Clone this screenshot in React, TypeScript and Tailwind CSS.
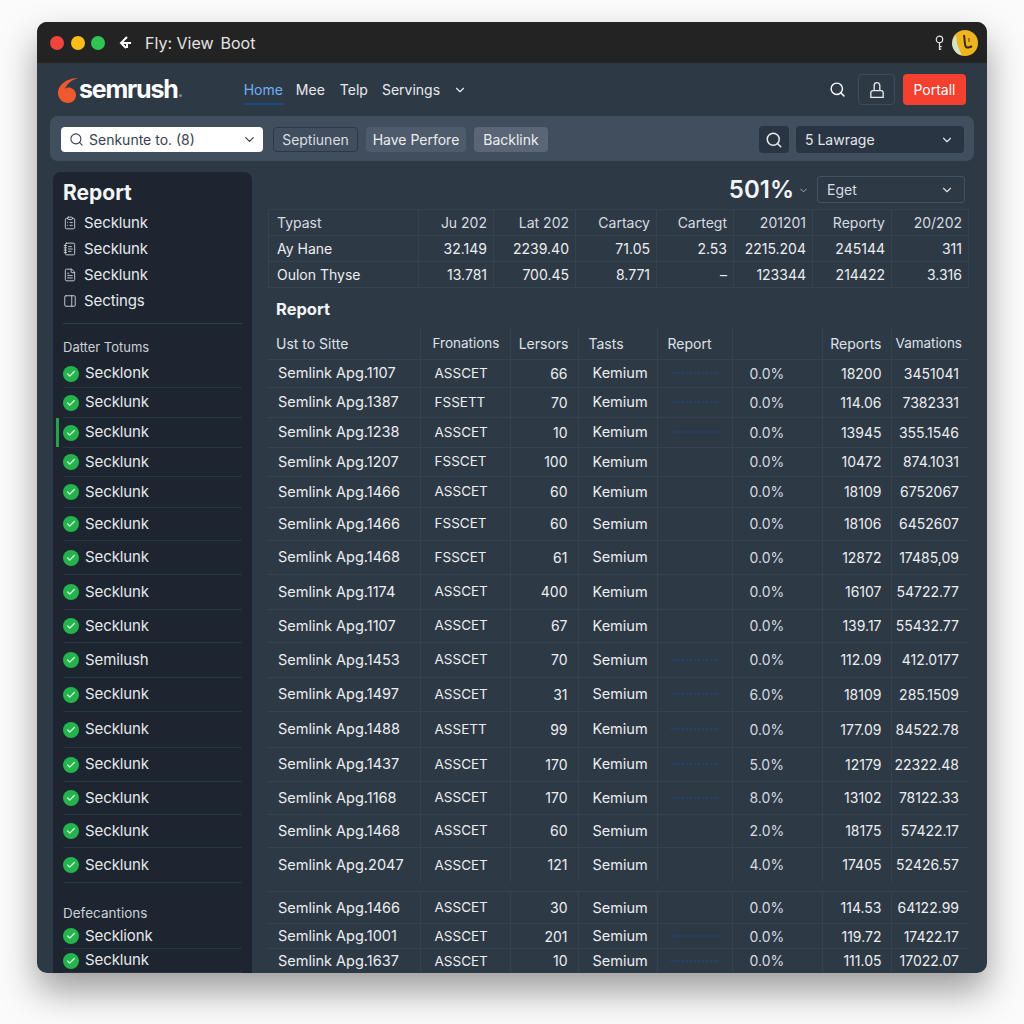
import { Check, ChevronDown, ClipboardList, FileText, NotebookText, PanelRight, Search } from "lucide-react";

const rows = [
  { h: "h-[28px]", name: "Semlink Apg.1107", code: "ASSCET", n: "66", kind: "Kemium", dash: true, pct: "0.0%", reports: "18200", vars: "3451041", side: "Secklonk" },
  { h: "h-[30px]", name: "Semlink Apg.1387", code: "FSSETT", n: "70", kind: "Kemium", dash: true, pct: "0.0%", reports: "114.06", vars: "7382331", side: "Secklunk" },
  { h: "h-[30px]", name: "Semlink Apg.1238", code: "ASSCET", n: "10", kind: "Kemium", dash: true, pct: "0.0%", reports: "13945", vars: "355.1546", side: "Secklunk" },
  { h: "h-[29px]", name: "Semlink Apg.1207", code: "FSSCET", n: "100", kind: "Kemium", dash: false, pct: "0.0%", reports: "10472", vars: "874.1031", side: "Secklunk" },
  { h: "h-[31px]", name: "Semlink Apg.1466", code: "ASSCET", n: "60", kind: "Kemium", dash: false, pct: "0.0%", reports: "18109", vars: "6752067", side: "Secklunk" },
  { h: "h-[33px]", name: "Semlink Apg.1466", code: "FSSCET", n: "60", kind: "Semium", dash: false, pct: "0.0%", reports: "18106", vars: "6452607", side: "Secklunk" },
  { h: "h-[34px]", name: "Semlink Apg.1468", code: "FSSCET", n: "61", kind: "Semium", dash: false, pct: "0.0%", reports: "12872", vars: "17485,09", side: "Secklunk" },
  { h: "h-[35px]", name: "Semlink Apg.1174", code: "ASSCET", n: "400", kind: "Kemium", dash: false, pct: "0.0%", reports: "16107", vars: "54722.77", side: "Secklunk" },
  { h: "h-[33px]", name: "Semlink Apg.1107", code: "ASSCET", n: "67", kind: "Kemium", dash: false, pct: "0.0%", reports: "139.17", vars: "55432.77", side: "Secklunk" },
  { h: "h-[35px]", name: "Semlink Apg.1453", code: "ASSCET", n: "70", kind: "Semium", dash: true, pct: "0.0%", reports: "112.09", vars: "412.0177", side: "Semilush" },
  { h: "h-[34px]", name: "Semlink Apg.1497", code: "ASSCET", n: "31", kind: "Semium", dash: true, pct: "6.0%", reports: "18109", vars: "285.1509", side: "Secklunk" },
  { h: "h-[36px]", name: "Semlink Apg.1488", code: "ASSETT", n: "99", kind: "Kemium", dash: true, pct: "0.0%", reports: "177.09", vars: "84522.78", side: "Secklunk" },
  { h: "h-[34px]", name: "Semlink Apg.1437", code: "ASSCET", n: "170", kind: "Kemium", dash: true, pct: "5.0%", reports: "12179", vars: "22322.48", side: "Secklunk" },
  { h: "h-[33px]", name: "Semlink Apg.1168", code: "ASSCET", n: "170", kind: "Kemium", dash: true, pct: "8.0%", reports: "13102", vars: "78122.33", side: "Secklunk" },
  { h: "h-[33px]", name: "Semlink Apg.1468", code: "ASSCET", n: "60", kind: "Semium", dash: false, pct: "2.0%", reports: "18175", vars: "57422.17", side: "Secklunk" },
  { h: "h-[35px]", name: "Semlink Apg.2047", code: "ASSCET", n: "121", kind: "Semium", dash: false, pct: "4.0%", reports: "17405", vars: "52426.57", side: "Secklunk" },
];

const lastRows = [
  { h: "h-[32px]", name: "Semlink Apg.1466", code: "ASSCET", n: "30", kind: "Semium", dash: false, pct: "0.0%", reports: "114.53", vars: "64122.99" },
  { h: "h-[25px]", name: "Semlink Apg.1001", code: "ASSCET", n: "201", kind: "Semium", dash: true, pct: "0.0%", reports: "119.72", vars: "17422.17" },
  { h: "h-[24px]", name: "Semlink Apg.1637", code: "ASSCET", n: "10", kind: "Semium", dash: true, pct: "0.0%", reports: "111.05", vars: "17022.07" },
];

const topRows = [
  ["Typast", "Ju 202", "Lat 202", "Cartacy", "Cartegt", "201201", "Reporty", "20/202"],
  ["Ay Hane", "32.149", "2239.40", "71.05", "2.53", "2215.204", "245144", "311"],
  ["Oulon Thyse", "13.781", "700.45", "8.771", "–", "123344", "214422", "3.316"],
];

const topCols = ["w-[150px]", "w-[75px]", "w-[82px]", "w-[81px]", "w-[77px]", "w-[79px]", "w-[79px]", "w-[77px]"];
const cell = "border-r border-[#37424f] last:border-r-0";

function Colgroup() {
  return (
    <colgroup>
      <col className="w-[152px]" />
      <col className="w-[90px]" />
      <col className="w-[68px]" />
      <col className="w-[79px]" />
      <col className="w-[75px]" />
      <col className="w-[90px]" />
      <col className="w-[69px]" />
      <col className="w-[77px]" />
    </colgroup>
  );
}

function DataRow({ row }: { row: (typeof lastRows)[number] }) {
  return (
    <tr className={`${row.h} border-b border-[#37424f] last:border-b-0`}>
      <td className={`${cell} pl-[10px] text-[14.5px] whitespace-nowrap`}>{row.name}</td>
      <td className={`${cell} pl-[14px] text-[13.5px]`}>{row.code}</td>
      <td className={`${cell} pr-[10px] text-right`}>{row.n}</td>
      <td className={`${cell} pl-[14px] text-[14.5px]`}>{row.kind}</td>
      <td className={cell}>
        {row.dash && <div className="ml-[13px] w-[48px] border-t-2 border-dotted border-[#25416f]" />}
      </td>
      <td className={`${cell} pl-[17px] text-[#d6dbe1]`}>{row.pct}</td>
      <td className={`${cell} pr-[9px] text-right`}>{row.reports}</td>
      <td className={`${cell} pr-[9px] text-right`}>{row.vars}</td>
    </tr>
  );
}

function SideCheck({ label, height, active }: { label: string; height: string; active?: boolean }) {
  return (
    <div className={`${height} relative flex items-center gap-[6px] border-b border-[#2a3440] text-[15px] tracking-[-0.1px] text-[#e8eaed]`}>
      {active && <span className="absolute -left-[7px] top-0 h-full w-[3px] bg-[#22a447]" />}
      <span className="flex size-[16px] items-center justify-center rounded-full bg-[#25b34d]">
        <Check size={10} strokeWidth={3} className="text-[#d8f5df]" />
      </span>
      {label}
    </div>
  );
}

function SideDoc({ label, icon: Icon }: { label: string; icon: typeof FileText }) {
  return (
    <div className="flex h-[26px] items-center gap-[7px] text-[15px] tracking-[-0.1px] text-[#e8eaed]">
      <Icon size={14} strokeWidth={1.5} className="text-[#d7dade]" />
      {label}
    </div>
  );
}

export default function App() {
  return (
    <div className="h-screen overflow-hidden bg-[#fbfbfb] pl-[37px] pt-[22px] font-['Inter','Liberation_Sans',sans-serif]">
      <div className="flex h-[951px] w-[950px] flex-col overflow-hidden rounded-[10px] bg-[#2e3946] shadow-[0_18px_36px_rgba(0,0,0,0.38)]">
        {/* title bar */}
        <div className="flex h-[41px] shrink-0 items-center bg-[#232323] pl-[13px] pr-[9px] text-[16px] text-[#e4e4e4]">
          <span className="size-[14px] rounded-full bg-[#f2443a]" />
          <span className="ml-[7px] size-[14px] rounded-full bg-[#f9bd1a]" />
          <span className="ml-[6px] size-[14px] rounded-full bg-[#2fc552]" />
          <svg viewBox="0 0 16 16" className="ml-[13px] size-[16px] text-white" fill="none" stroke="currentColor" strokeWidth="2">
            <path d="M9 2 3 8l5 5M3.5 8H13M9 8v5" />
          </svg>
          <span className="ml-[11px]">Fly: View</span>
          <span className="ml-[7px]">Boot</span>
          <svg viewBox="0 0 12 18" className="ml-auto h-[16px] w-[11px] text-[#e3e3e3]" fill="none" stroke="currentColor" strokeWidth="1.4">
            <circle cx="6" cy="5" r="3.6" />
            <path d="M6 9v8M6 13h2.5M6 16h2" />
          </svg>
          <span className="relative ml-[7px] flex size-[26px] items-center justify-center overflow-hidden rounded-full bg-[#f0b41f]">
            <svg viewBox="0 0 26 26" className="size-[26px]" fill="none">
              <path d="M0 14a13 13 0 0 0 10 12L5 14 4 5A13 13 0 0 0 0 14Z" fill="#cfe3d0" />
              <path d="M12 5c1 4 0 9 2 12 2 1 5 0 6-1" stroke="#3a2c10" strokeWidth="2" />
              <path d="M17 8v4" stroke="#8a6410" strokeWidth="1.5" />
            </svg>
          </span>
        </div>

        {/* nav */}
        <div className="flex h-[53px] shrink-0 items-center pl-[21px] pr-[21px] text-[14px] text-[#e8ebee]">
          <svg viewBox="0 0 22 26" className="h-[26px] w-[22px]">
            <path d="M20 1C16 1 12 2 8 4 3 7 0 11 0 16c0 6 5 10 10 10 4 0 8-3 8-8 0-3-2-6-5-7-3-1-5 0-6 1 1-4 6-9 13-11Z" fill="#ee5a2e" />
          </svg>
          <span className="-ml-[1px] text-[25px] font-bold leading-none tracking-[-1.2px] text-white">semrush</span>
          <span className="ml-[1px] mt-[12px] size-[3px] rounded-full bg-[#7b8794]" />
          <nav className="ml-[62px] flex h-full items-center">
            <span className="relative flex h-full items-center text-[#6fb0f5]">
              Home
              <span className="absolute bottom-[11px] left-0 h-[2px] w-full bg-[#1b4a85]" />
            </span>
            <span className="ml-[13px]">Mee</span>
            <span className="ml-[15px]">Telp</span>
            <span className="ml-[14px]">Servings</span>
            <ChevronDown size={14} className="ml-[13px]" />
          </nav>
          <Search size={17} strokeWidth={2} className="ml-auto text-white" />
          <span className="ml-[12px] flex h-[31px] w-[37px] items-center justify-center rounded-[4px] border border-[#3f4c5b]">
            <svg viewBox="0 0 16 16" className="size-[18px] text-[#e6e8eb]" fill="none" stroke="currentColor" strokeWidth="1.2">
              <path d="M5.5 8.5V4a2.5 2.5 0 0 1 5 0v4.5" />
              <path d="M2.5 14.5v-4a2 2 0 0 1 2-2h7a2 2 0 0 1 2 2v4z" />
            </svg>
          </span>
          <span className="ml-[8px] flex h-[31px] w-[63px] items-center justify-center rounded-[4px] bg-[#f4402f] text-white">
            Portall
          </span>
        </div>

        {/* filter bar */}
        <div className="mx-[13px] flex h-[45px] shrink-0 items-center rounded-[8px] bg-[#414e5d] pl-[11px] pr-[10px] pt-[2px] text-[14px]">
          <div className="flex h-[25px] w-[202px] items-center rounded-[4px] bg-white pl-[8px] pr-[6px] text-[#374151]">
            <Search size={15} strokeWidth={1.8} className="mr-[5px] text-[#374151]" />
            Senkunte to. (8)
            <ChevronDown size={15} className="ml-auto" />
          </div>
          <span className="ml-[10px] flex h-[25px] w-[85px] items-center justify-center rounded-[4px] border border-[#2d3846] text-[#d9dde2]">Septiunen</span>
          <span className="ml-[8px] flex h-[25px] w-[100px] items-center justify-center rounded-[4px] bg-[#4e5b6a] text-[#eceef0]">Have Perfore</span>
          <span className="ml-[8px] flex h-[25px] w-[74px] items-center justify-center rounded-[4px] bg-[#5a6676] text-[#eceef0]">Backlink</span>
          <span className="ml-auto flex h-[27px] w-[30px] items-center justify-center rounded-[4px] bg-[#2a3543]">
            <Search size={18} strokeWidth={2} className="text-[#e8ebee]" />
          </span>
          <div className="ml-[7px] flex h-[27px] w-[168px] items-center rounded-[4px] bg-[#2a3543] pl-[9px] pr-[10px] text-[#e2e5e9]">
            5 Lawrage
            <ChevronDown size={14} className="ml-auto" />
          </div>
        </div>

        <div className="flex min-h-0 flex-1 pt-[11px]">
          {/* sidebar */}
          <aside className="ml-[16px] w-[199px] shrink-0 rounded-t-[8px] bg-[#1c2530] pl-[10px] pr-[10px]">
            <div className="flex h-[38px] items-end pb-[7px] text-[21px] font-bold leading-none text-[#f5f6f7]">Report</div>
            <SideDoc label="Secklunk" icon={ClipboardList} />
            <SideDoc label="Secklunk" icon={NotebookText} />
            <SideDoc label="Secklunk" icon={FileText} />
            <SideDoc label="Sectings" icon={PanelRight} />
            <div className="mt-[9px] border-t border-[#333d49]" />
            <div className="flex h-[36px] items-end pb-[3px] text-[13px] text-[#cdd1d6]">Datter Totums</div>
            {rows.map((row, i) => (
              <SideCheck key={i} label={row.side} height={row.h} active={i === 2} />
            ))}
            <div className="flex h-[41px] items-end pb-[1px] text-[13.5px] text-[#cdd1d6]">Defecantions</div>
            <SideCheck label="Secklionk" height="h-[25px]" />
            <SideCheck label="Secklunk" height="h-[24px]" />
          </aside>

          {/* main */}
          <main className="ml-[16px] w-[700px] shrink-0 text-[14px] text-[#eceef0]">
            <div className="flex h-[37px] items-start justify-end pr-[3px] pt-[4px]">
              <span className="text-[24px] font-semibold leading-[27px] text-[#f3f4f6]">501%</span>
              <ChevronDown size={11} className="ml-[4px] mt-[9px] text-[#aab2bc]" />
              <div className="ml-[8px] flex h-[27px] w-[148px] items-center rounded-[3px] border border-[#45515f] pl-[9px] pr-[10px] text-[#d8dce1]">
                Eget
                <ChevronDown size={14} className="ml-auto" />
              </div>
            </div>

            <table className="w-full table-fixed border-collapse border border-[#37424f]">
              <colgroup>
                {topCols.map((w, i) => (
                  <col key={i} className={w} />
                ))}
              </colgroup>
              <tbody>
                {topRows.map((r, i) => (
                  <tr key={i} className="h-[26px] border-b border-[#37424f]">
                    {r.map((v, j) => (
                      <td key={j} className={`${cell} ${j === 0 ? "pl-[8px] text-left" : "pr-[6px] text-right"} ${i === 0 ? "text-[#d8dce1]" : ""} whitespace-nowrap`}>
                        {v}
                      </td>
                    ))}
                  </tr>
                ))}
              </tbody>
            </table>

            <div className="flex h-[40px] items-end pb-[11px] pl-[8px] text-[16.5px] font-bold leading-none text-[#f3f4f6]">Report</div>

            <table className="w-full table-fixed border-collapse">
              <Colgroup />
              <thead>
                <tr className="h-[31px] border-b border-[#37424f] text-[#dfe2e6]">
                  <th className={`${cell} pl-[8px] text-left font-normal`}>Ust to Sitte</th>
                  <th className={`${cell} pl-[12px] text-left text-[13.5px] font-normal`}>Fronations</th>
                  <th className={`${cell} pr-[9px] text-right font-normal`}>Lersors</th>
                  <th className={`${cell} pl-[10px] text-left font-normal`}>Tasts</th>
                  <th className={`${cell} pl-[10px] text-left font-normal`}>Report</th>
                  <th className={cell} />
                  <th className={`${cell} pr-[9px] text-right font-normal`}>Reports</th>
                  <th className={`${cell} pr-[6px] text-right text-[13.5px] font-normal`}>Vamations</th>
                </tr>
              </thead>
              <tbody>
                {rows.map((row, i) => (
                  <DataRow key={i} row={row} />
                ))}
              </tbody>
            </table>

            <table className="mt-[9px] w-full table-fixed border-collapse border-t border-[#37424f]">
              <Colgroup />
              <tbody>
                {lastRows.map((row, i) => (
                  <DataRow key={i} row={row} />
                ))}
              </tbody>
            </table>
          </main>
        </div>
      </div>
    </div>
  );
}
